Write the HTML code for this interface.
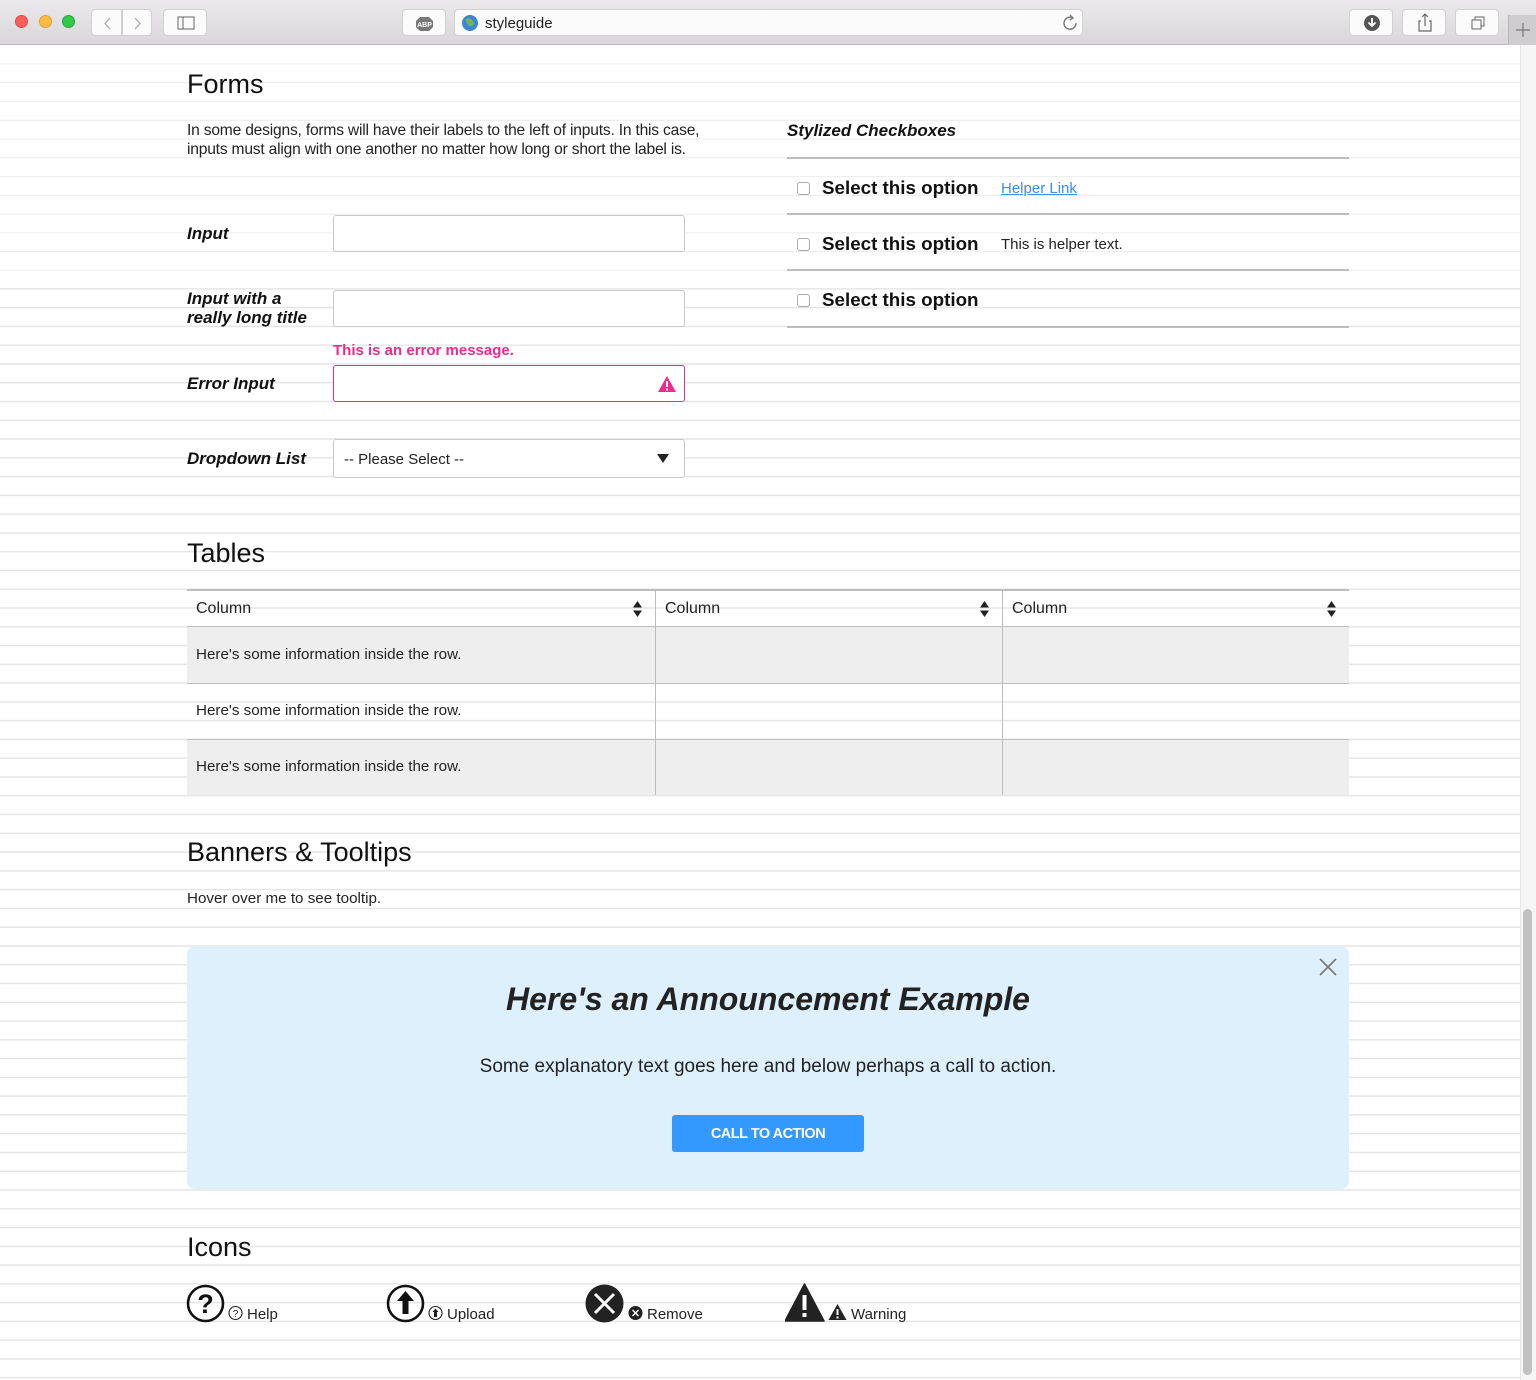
<!DOCTYPE html>
<html><head><meta charset="utf-8">
<style>
*{margin:0;padding:0;box-sizing:border-box}
html,body{width:1536px;height:1380px;overflow:hidden;background:#fff;font-family:"Liberation Sans",sans-serif;color:#222}
#page{position:absolute;left:0;top:45px;width:1520px;height:1335px;
background:repeating-linear-gradient(to bottom,transparent 0,transparent 17.77px,#e4e4e4 17.77px,#e4e4e4 18.77px);background-position:0 0.5px}
.a{position:absolute;white-space:nowrap}
#bar{position:absolute;left:0;top:0;width:1536px;height:45px;background:linear-gradient(#ebe9eb,#d9d7d9);border-bottom:1px solid #b9b9b9}
.btn{position:absolute;top:9px;height:27px;background:#fbfbfb;border:1px solid #d0d0d0;border-radius:4px}
.dot{position:absolute;top:15px;width:13px;height:13px;border-radius:50%}
h2{position:absolute;font-weight:normal;font-size:27px;color:#111;left:187px;line-height:30px}
.lbl{position:absolute;left:187px;font-weight:bold;font-style:italic;font-size:17px;color:#111;line-height:19px}
.inp{position:absolute;left:333px;width:352px;height:37px;border:1px solid #c8c8c8;border-radius:3px;background:#fff}
.sep{position:absolute;left:787px;width:562px;height:2px;background:#bdbdbd}
.cb{position:absolute;left:797px;width:13px;height:13px;border:1px solid #aaa;border-radius:3px;background:#fff}
.opt{position:absolute;left:822px;font-weight:bold;font-size:18.8px;color:#111}
.cell{position:absolute;font-size:15.2px;color:#222}
</style></head><body>
<div id="bar">
<div class="dot" style="left:15px;background:#fc605c;border:1px solid #de4a46"></div>
<div class="dot" style="left:39px;background:#fdbc40;border:1px solid #dea032"></div>
<div class="dot" style="left:62px;background:#34c84a;border:1px solid #27a83a"></div>
<div class="btn" style="left:91px;width:31px;border-radius:4px 0 0 4px"><svg width="31" height="27"><path d="M18 8l-5 5.5 5 5.5" stroke="#aaa" fill="none" stroke-width="1.3"/></svg></div>
<div class="btn" style="left:122px;width:30px;border-radius:0 4px 4px 0"><svg width="30" height="27"><path d="M12 8l5 5.5-5 5.5" stroke="#aaa" fill="none" stroke-width="1.3"/></svg></div>
<div class="btn" style="left:163px;width:44px"><svg width="44" height="27"><rect x="14" y="7" width="16" height="12" fill="none" stroke="#666"/><line x1="19" y1="7" x2="19" y2="19" stroke="#666"/></svg></div>
<div class="btn" style="left:402px;width:44px"><svg width="44" height="27"><polygon points="17,7 26,7 30,11 30,17 26,21 17,21 13,17 13,11" fill="#777"/><text x="21.5" y="17" font-size="7" fill="#fff" text-anchor="middle" font-family="Liberation Sans" font-weight="bold">ABP</text></svg></div>
<div class="btn" style="left:454px;width:629px"><svg width="629" height="27" style="position:absolute;left:0;top:0"><circle cx="15" cy="13" r="8" fill="#3d86d6"/><path d="M10 10q3-3 6-1t3 5q-2 3-5 2" fill="#6fb55a"/><path d="M621 13a6 6 0 1 1-3-5" stroke="#777" fill="none" stroke-width="1.4"/><path d="M615 5l3 3-3 2" stroke="#777" fill="none" stroke-width="1.4"/></svg><span class="a" style="left:30px;top:5px;font-size:15px;color:#222">styleguide</span></div>
<div class="btn" style="left:1349px;width:44px"><svg width="44" height="27"><circle cx="22" cy="13" r="8" fill="#555"/><path d="M22 8v8M18.5 12.5l3.5 3.5 3.5-3.5" stroke="#fff" fill="none" stroke-width="1.8"/></svg></div>
<div class="btn" style="left:1402px;width:44px"><svg width="44" height="27"><path d="M18 11h-2v10h12v-10h-2M22 16v-12M19 7l3-3 3 3" stroke="#666" fill="none" stroke-width="1.2"/></svg></div>
<div class="btn" style="left:1455px;width:44px"><svg width="44" height="27"><rect x="16" y="10" width="9" height="9" fill="none" stroke="#666"/><path d="M19 10v-3h9v9h-3" fill="none" stroke="#666"/></svg></div>
<div style="position:absolute;left:1508px;top:15px;width:28px;height:30px;background:#cfcdcf;border-left:1px solid #b5b5b5"><svg width="28" height="30"><path d="M14 8v14M7 15h14" stroke="#777" stroke-width="1.2"/></svg></div>
</div>

<div style="position:absolute;left:1520px;top:45px;width:16px;height:1335px;background:#f6f6f6;border-left:1px solid #e6e6e6"></div>
<div style="position:absolute;left:1523px;top:909px;width:9px;height:466px;background:#c1c1c1;border-radius:5px"></div>

<div id="page"></div>

<!-- Forms -->
<h2 style="top:69px">Forms</h2>
<div class="a" style="left:187px;top:121px;font-size:15.6px;line-height:19px;color:#222;letter-spacing:-0.2px">In some designs, forms will have their labels to the left of inputs. In this case,<br>inputs must align with one another no matter how long or short the label is.</div>

<div class="lbl" style="top:224px">Input</div>
<div class="inp" style="top:215px"></div>
<div class="lbl" style="top:289px">Input with a<br>really long title</div>
<div class="inp" style="top:290px"></div>
<div class="a" style="left:333px;top:342px;font-size:15px;font-weight:bold;color:#ee2a8f">This is an error message.</div>
<div class="lbl" style="top:374px">Error Input</div>
<div class="inp" style="top:365px;border-color:#ee2a8f"><svg width="20" height="18" style="position:absolute;right:7px;top:9px"><path d="M10 1L19 17H1Z" fill="#ee2a8f"/><rect x="9" y="6" width="2" height="6" fill="#fff"/><rect x="9" y="13.5" width="2" height="2" fill="#fff"/></svg></div>
<div class="lbl" style="top:449px">Dropdown List</div>
<div class="inp" style="top:439px;height:39px"><span class="a" style="left:10px;top:11px;font-size:15px;color:#222">-- Please Select --</span><svg width="12" height="10" style="position:absolute;right:15px;top:14px"><path d="M0 0h12L6 9z" fill="#222"/></svg></div>

<div class="a" style="left:787px;top:121px;font-weight:bold;font-style:italic;font-size:17px;color:#111">Stylized Checkboxes</div>
<div class="sep" style="top:157px"></div>
<div class="cb" style="top:182px"></div><div class="opt" style="top:177px">Select this option</div>
<div class="a" style="left:1001px;top:180px;font-size:15px;color:#3b8ef0;text-decoration:underline">Helper Link</div>
<div class="sep" style="top:213px"></div>
<div class="cb" style="top:238px"></div><div class="opt" style="top:233px">Select this option</div>
<div class="a" style="left:1001px;top:236px;font-size:15px;color:#222">This is helper text.</div>
<div class="sep" style="top:269px"></div>
<div class="cb" style="top:294px"></div><div class="opt" style="top:289px">Select this option</div>
<div class="sep" style="top:326px"></div>

<!-- Tables -->
<h2 style="top:538px">Tables</h2>
<div style="position:absolute;left:187px;top:589px;width:1162px;height:2px;background:#bdbdbd"></div>
<div style="position:absolute;left:187px;top:626px;width:1162px;height:1px;background:#bdbdbd"></div>
<div style="position:absolute;left:187px;top:627px;width:1162px;height:56px;background:#eee"></div>
<div style="position:absolute;left:187px;top:683px;width:1162px;height:1px;background:#bdbdbd"></div>
<div style="position:absolute;left:187px;top:739px;width:1162px;height:1px;background:#bdbdbd"></div>
<div style="position:absolute;left:187px;top:740px;width:1162px;height:55px;background:#eee"></div>
<div style="position:absolute;left:655px;top:591px;width:1px;height:204px;background:#bdbdbd"></div>
<div style="position:absolute;left:1002px;top:591px;width:1px;height:204px;background:#bdbdbd"></div>
<div class="cell" style="left:196px;top:600px;font-size:16px">Column</div>
<div class="cell" style="left:665px;top:600px;font-size:16px">Column</div>
<div class="cell" style="left:1012px;top:600px;font-size:16px">Column</div>
<svg class="a" style="left:633px;top:601px" width="9" height="16"><path d="M0 6.5L4.5 0 9 6.5zM0 9.5h9L4.5 16z" fill="#222"/></svg>
<svg class="a" style="left:980px;top:601px" width="9" height="16"><path d="M0 6.5L4.5 0 9 6.5zM0 9.5h9L4.5 16z" fill="#222"/></svg>
<svg class="a" style="left:1327px;top:601px" width="9" height="16"><path d="M0 6.5L4.5 0 9 6.5zM0 9.5h9L4.5 16z" fill="#222"/></svg>
<div class="cell" style="left:196px;top:646px">Here's some information inside the row.</div>
<div class="cell" style="left:196px;top:702px">Here's some information inside the row.</div>
<div class="cell" style="left:196px;top:758px">Here's some information inside the row.</div>

<!-- Banners -->
<h2 style="top:837px">Banners &amp; Tooltips</h2>
<div class="a" style="left:187px;top:890px;font-size:15.2px">Hover over me to see tooltip.</div>
<div style="position:absolute;left:187px;top:946px;width:1162px;height:243px;background:#dff0fd;border-radius:8px">
<svg style="position:absolute;right:12px;top:12px" width="18" height="18"><path d="M1 1L17 17M17 1L1 17" stroke="#777" stroke-width="1.6"/></svg>
<div style="position:absolute;left:0;width:100%;top:35px;text-align:center;font-weight:bold;font-style:italic;font-size:32px;color:#222">Here's an Announcement Example</div>
<div style="position:absolute;left:0;width:100%;top:110px;text-align:center;font-size:19px;color:#222">Some explanatory text goes here and below perhaps a call to action.</div>
<div style="position:absolute;left:485px;top:169px;width:192px;height:37px;background:#3399ff;border-radius:3px;color:#fff;font-weight:bold;font-size:14.5px;text-align:center;line-height:38px;letter-spacing:-0.5px">CALL TO ACTION</div>
</div>

<!-- Icons -->
<h2 style="top:1232px">Icons</h2>
<svg class="a" style="left:186px;top:1284px" width="40" height="40"><circle cx="19.5" cy="19.5" r="17.5" fill="none" stroke="#111" stroke-width="2.6"/><text x="19.5" y="29" text-anchor="middle" font-size="27" font-weight="bold" font-family="Liberation Sans" fill="#111">?</text></svg>
<svg class="a" style="left:228px;top:1305px" width="16" height="16"><circle cx="7.5" cy="8" r="6.5" fill="none" stroke="#222" stroke-width="1.1"/><text x="7.5" y="12" text-anchor="middle" font-size="10" font-family="Liberation Sans" fill="#222">?</text></svg>
<div class="a" style="left:247px;top:1306px;font-size:15px">Help</div>

<svg class="a" style="left:386px;top:1284px" width="40" height="40"><circle cx="19.5" cy="19.5" r="17.5" fill="none" stroke="#111" stroke-width="2.6"/><path d="M19.5 7L28 17h-5.5v13h-6V17H11z" fill="#111"/></svg>
<svg class="a" style="left:428px;top:1305px" width="16" height="16"><circle cx="7.5" cy="8" r="6.5" fill="none" stroke="#222" stroke-width="1.1"/><path d="M7.5 3.5L10.5 7H9v5H6V7H4.5z" fill="#222"/></svg>
<div class="a" style="left:447px;top:1306px;font-size:15px">Upload</div>

<svg class="a" style="left:585px;top:1284px" width="40" height="40"><circle cx="19.5" cy="19.5" r="19" fill="#222"/><path d="M10 10L29 29M29 10L10 29" stroke="#fff" stroke-width="3"/></svg>
<svg class="a" style="left:628px;top:1305px" width="16" height="16"><circle cx="7.5" cy="8" r="7" fill="#222"/><path d="M4.5 5l6 6M10.5 5l-6 6" stroke="#fff" stroke-width="1.4"/></svg>
<div class="a" style="left:647px;top:1306px;font-size:15px">Remove</div>

<svg class="a" style="left:785px;top:1283px" width="40" height="40"><path d="M19.5 1L39 38H0Z" fill="#222" stroke="#222" stroke-width="1.5" stroke-linejoin="round"/><rect x="17.5" y="12" width="4" height="15" fill="#fff"/><rect x="17.5" y="30" width="4" height="4" fill="#fff"/></svg>
<svg class="a" style="left:828px;top:1303px" width="19" height="18"><path d="M9.5 1L18.5 17H0.5Z" fill="#222"/><rect x="8.5" y="6" width="2" height="6" fill="#fff"/><rect x="8.5" y="13.5" width="2" height="2" fill="#fff"/></svg>
<div class="a" style="left:851px;top:1306px;font-size:15px">Warning</div>
</body></html>
